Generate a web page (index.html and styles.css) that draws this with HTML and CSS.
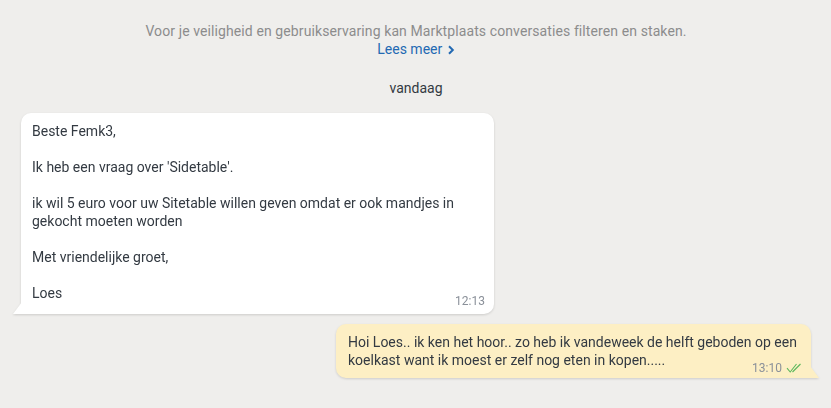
FILE: index.html
```html
<!DOCTYPE html>
<html lang="nl">
<head>
<meta charset="utf-8">
<title>Marktplaats chat</title>
<link rel="stylesheet" href="styles.css">
</head>
<body>
<div class="page">
  <div class="notice">
    <p class="notice-text">Voor je veiligheid en gebruikservaring kan Marktplaats conversaties filteren en staken.</p>
    <a class="notice-link" href="#">Lees meer <svg class="chev" width="8" height="10" viewBox="0 0 8 10"><path d="M2 1.2L5.8 5 2 8.8" fill="none" stroke="currentColor" stroke-width="2"/></svg></a>
  </div>
  <div class="day">vandaag</div>
  <div class="thread">
    <div class="msg msg-in">
      <div class="bubble">
        <p>Beste Femk3,</p>
        <p>Ik heb een vraag over 'Sidetable'.</p>
        <p>ik wil 5 euro voor uw Sitetable willen geven omdat er ook mandjes in gekocht moeten worden</p>
        <p>Met vriendelijke groet,</p>
        <p>Loes<span class="meta">12:13</span></p>
      </div>
    </div>
    <div class="msg msg-out">
      <div class="bubble">
        <p>Hoi Loes.. ik ken het hoor.. zo heb ik vandeweek de helft geboden op een koelkast want ik moest er zelf nog eten in kopen.....<span class="meta">13:10<svg class="ticks" width="16" height="10" viewBox="0 0 16 10"><path d="M1 5.2L4.2 9 10.5 1M6.5 9L14.5 1" fill="none" stroke="#5cb85c" stroke-width="1.1"/></svg></span></p>
      </div>
    </div>
  </div>
</div>
</body>
</html>
```
FILE: styles.css
```css
html, body {
  margin: 0;
  padding: 0;
  background: #efeeec;
}
body {
  font-family: Roboto, "Liberation Sans", Arial, sans-serif;
  font-size: 14px;
  line-height: 18px;
  color: #333a42;
}
.page {
  padding: 22px 20px 20px 21px;
}
.notice {
  text-align: center;
  color: #8c8c8c;
  letter-spacing: 0.1px;
}
.notice-text {
  margin: 0;
}
.notice-link {
  color: #2369b3;
  text-decoration: none;
  letter-spacing: 0;
}
.chev {
  vertical-align: -1px;
  margin-left: 1px;
}
.day {
  text-align: center;
  color: #333a42;
  margin-top: 21px;
}
.thread {
  display: flex;
  flex-direction: column;
  gap: 10px;
  margin-top: 16px;
}
.msg {
  display: flex;
}
.msg-in {
  justify-content: flex-start;
}
.msg-out {
  justify-content: flex-end;
}
.bubble {
  position: relative;
  display: flow-root;
  box-sizing: border-box;
  padding: 9px 9px 4px 11px;
  border-radius: 10px;
  filter: drop-shadow(0 1px 1px rgba(0, 0, 0, 0.14));
}
.bubble p {
  margin: 0 0 18px;
}
.bubble p:last-child {
  margin-bottom: 0;
}
.msg-in .bubble {
  width: 473px;
  background: #ffffff;
  border-bottom-left-radius: 0;
}
.msg-out .bubble {
  width: 475px;
  background: #fdefc4;
  border-bottom-right-radius: 0;
  padding-left: 12px;
  padding-bottom: 1px;
}
.bubble::before {
  content: "";
  position: absolute;
  bottom: 0;
  width: 9px;
  height: 12px;
}
.msg-in .bubble::before {
  left: -8px;
  background: #ffffff;
  clip-path: polygon(100% 0, 100% 100%, 0 100%);
}
.msg-out .bubble::before {
  right: -8px;
  background: #fdefc4;
  clip-path: polygon(0 0, 100% 100%, 0 100%);
}
.meta {
  float: right;
  margin-top: 8px;
  margin-left: 10px;
  font-size: 12px;
  line-height: 18px;
  color: #8a9099;
}
.ticks {
  vertical-align: -1px;
  margin-left: 4px;
}
```
